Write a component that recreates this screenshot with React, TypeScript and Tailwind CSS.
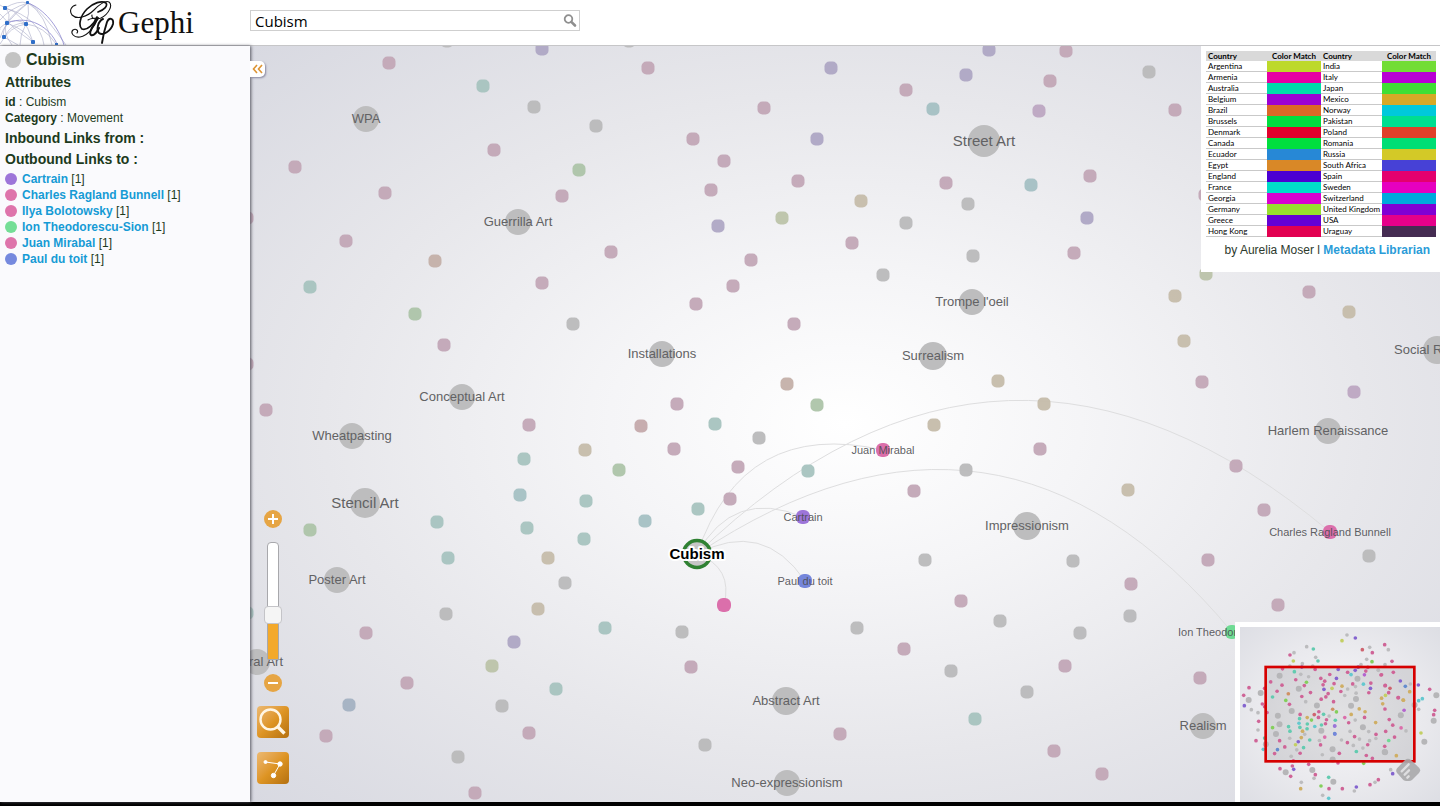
import { useState } from "react";

type Kind =
  | "pink" | "grey" | "teal" | "green" | "purple" | "tan"
  | "brown" | "red" | "blue" | "olive" | "magenta" | "aqua";

const MUTED: Record<Kind, string> = {
  pink: "#c2a7b6", grey: "#b9b9ba", teal: "#a7c3bf", green: "#adc4a9",
  purple: "#aea6c4", tan: "#c5bcaa", brown: "#c4b0a9", red: "#c4a9ab",
  blue: "#a3b1c2", olive: "#bcc3a9", magenta: "#bda6c2", aqua: "#a4c0c3",
};

const VIVID: Record<Kind, string> = {
  pink: "#cf6497", grey: "#bcbcbe", teal: "#63cbb0", green: "#84cf5c",
  purple: "#8464cf", tan: "#cfae64", brown: "#cf9164", red: "#cf6470",
  blue: "#648dcf", olive: "#c3cf64", magenta: "#b464cf", aqua: "#64c8cf",
};

const DOTS: Record<Kind, [number, number][]> = {
  pink: [
    [389, 63], [648, 68], [764, 108], [693, 139], [724, 161], [494, 150], [295, 167], [385, 193],
    [562, 196], [711, 190], [346, 241], [611, 252], [542, 283], [751, 260], [733, 286], [696, 304],
    [794, 324], [852, 243], [798, 181], [906, 90], [1066, 51], [1050, 81], [1175, 110], [946, 183],
    [1090, 176], [1074, 253], [444, 345], [266, 410], [529, 425], [677, 404], [674, 449], [738, 467],
    [730, 499], [1040, 449], [914, 491], [1202, 382], [1309, 292], [1236, 466], [1264, 510],
    [1208, 560], [1278, 605], [1131, 584], [961, 601], [904, 649], [1065, 666], [840, 734],
    [1054, 751], [1102, 774], [1200, 678], [691, 667], [529, 733], [475, 793], [407, 683],
    [366, 633], [326, 736], [1205, 195], [247, 218], [247, 364],
  ],
  grey: [
    [534, 107], [596, 126], [573, 324], [906, 223], [968, 204], [883, 275], [973, 256],
    [1149, 72], [759, 438], [966, 470], [925, 560], [1073, 561], [1130, 616], [1080, 633],
    [1000, 621], [857, 628], [951, 671], [1027, 692], [682, 632], [705, 745], [565, 583],
    [446, 614], [502, 706], [458, 757], [1369, 556], [447, 41], [629, 41],
  ],
  teal: [
    [483, 86], [310, 287], [715, 424], [524, 459], [586, 501], [527, 528], [584, 539], [698, 509],
    [808, 471], [437, 522], [448, 558], [605, 628], [556, 689], [975, 719], [247, 613],
  ],
  green: [[579, 170], [415, 314], [817, 405], [619, 470], [310, 530]],
  purple: [[542, 49], [718, 226], [817, 139], [831, 68], [966, 75], [989, 50], [1087, 218], [514, 642]],
  tan: [
    [861, 201], [1175, 296], [1349, 312], [1184, 341], [998, 381], [1044, 404], [934, 425],
    [1128, 490], [585, 450], [548, 558], [538, 609],
  ],
  brown: [[435, 261], [787, 384]],
  red: [[641, 426]],
  blue: [[349, 705]],
  olive: [[782, 218], [492, 666], [1206, 274]],
  magenta: [[1039, 111], [1354, 392]],
  aqua: [[933, 109], [1031, 185], [520, 495], [645, 521]],
};

type Movement = { name: string; x: number; y: number; r: number; large?: boolean };

const MOVEMENTS: Movement[] = [
  { name: "WPA", x: 366, y: 119, r: 13 },
  { name: "Guerrilla Art", x: 518, y: 222, r: 13 },
  { name: "Street Art", x: 984, y: 141, r: 16, large: true },
  { name: "Trompe l'oeil", x: 972, y: 302, r: 13 },
  { name: "Surrealism", x: 933, y: 356, r: 14 },
  { name: "Installations", x: 662, y: 354, r: 13 },
  { name: "Conceptual Art", x: 462, y: 397, r: 13 },
  { name: "Wheatpasting", x: 352, y: 436, r: 13 },
  { name: "Stencil Art", x: 365, y: 503, r: 15, large: true },
  { name: "Poster Art", x: 337, y: 580, r: 13 },
  { name: "Mural Art", x: 257, y: 662, r: 13 },
  { name: "Impressionism", x: 1027, y: 526, r: 14 },
  { name: "Harlem Renaissance", x: 1328, y: 431, r: 13 },
  { name: "Social Realism", x: 1437, y: 350, r: 14 },
  { name: "Realism", x: 1203, y: 726, r: 13 },
  { name: "Abstract Art", x: 786, y: 701, r: 14 },
  { name: "Neo-expressionism", x: 787, y: 783, r: 13 },
];

const FOCUS = { x: 697, y: 554 };

const NEIGHBOURS = [
  { name: "Cartrain", x: 803, y: 517, fill: "#9d75d9", dot: "bg-[#9d75d9]", label: true },
  { name: "Charles Ragland Bunnell", x: 1330, y: 532, fill: "#db6fab", dot: "bg-[#de74ab]", label: true },
  { name: "Ilya Bolotowsky", x: 724, y: 605, fill: "#db6fab", dot: "bg-[#de74ab]", label: false },
  { name: "Ion Theodorescu-Sion", x: 1232, y: 632, fill: "#6fdb94", dot: "bg-[#74de96]", label: true },
  { name: "Juan Mirabal", x: 883, y: 450, fill: "#db6fab", dot: "bg-[#de74ab]", label: true },
  { name: "Paul du toit", x: 805, y: 581, fill: "#7586db", dot: "bg-[#7589de]", label: true },
];

function edgePath(x: number, y: number) {
  const dx = x - FOCUS.x;
  const dy = y - FOCUS.y;
  const cx = (FOCUS.x + x) / 2 + dy * 0.45;
  const cy = (FOCUS.y + y) / 2 - dx * 0.45;
  return `M${FOCUS.x} ${FOCUS.y}Q${cx} ${cy} ${x} ${y}`;
}

const KINDS = Object.keys(DOTS) as Kind[];

function Graph() {
  return (
    <svg
      className="absolute inset-0 size-full font-['Liberation_Sans',Arial,sans-serif]"
      viewBox="250 46 1190 756"
      preserveAspectRatio="xMinYMin slice"
      role="img"
      aria-label="Network of art movements and artists"
    >
      <g fill="none" stroke="#dededf" strokeWidth="1">
        {NEIGHBOURS.map((n) => (
          <path key={n.name} d={edgePath(n.x, n.y)} />
        ))}
      </g>
      {KINDS.map((k) => (
        <g key={k} fill={MUTED[k]} fillOpacity="0.95">
          {DOTS[k].map(([x, y]) => (
            <rect key={`${x}-${y}`} x={x - 6.5} y={y - 6.5} width="13" height="13" rx="5" />
          ))}
        </g>
      ))}
      {MOVEMENTS.map((m) => (
        <g key={m.name}>
          <circle cx={m.x} cy={m.y} r={m.r} fill="#bdbdbe" />
          <text x={m.x} y={m.y + (m.large ? 5 : 4)} fontSize={m.large ? 15 : 13} textAnchor="middle" fill="#626264">
            {m.name}
          </text>
        </g>
      ))}
      {NEIGHBOURS.map((n) => (
        <g key={n.name}>
          <rect x={n.x - 7} y={n.y - 7} width="14" height="14" rx="6" fill={n.fill} />
          {n.label && (
            <text x={n.x} y={n.y + 4} fontSize="11" textAnchor="middle" fill="#4c4c50" fillOpacity="0.9">
              {n.name}
            </text>
          )}
        </g>
      ))}
      <circle cx={FOCUS.x} cy={FOCUS.y} r="13.5" fill="#c6c6c6" stroke="#2f8132" strokeWidth="3.5" />
      <text
        x={FOCUS.x}
        y={FOCUS.y + 5}
        fontSize="15"
        fontWeight="bold"
        textAnchor="middle"
        fill="#000"
        stroke="#fff"
        strokeWidth="4"
        strokeLinejoin="round"
        paintOrder="stroke"
      >
        Cubism
      </text>
    </svg>
  );
}

const OUTER: Partial<Record<Kind, [number, number][]>> = {
  grey: [
    [351, 61], [230, 96], [192, 114], [257, 128], [217, 147], [419, 98], [475, 105], [410, 134],
    [64, 285], [84, 294], [84, 346], [566, 284], [393, 150], [465, 150], [252, 491], [214, 503],
    [373, 529], [278, 542], [435, 503], [482, 465], [541, 208], [445, 167],
  ],
  pink: [
    [180, 121], [464, 90], [427, 114], [486, 140], [57, 219], [41, 242], [97, 268], [86, 320],
    [78, 378], [599, 224], [614, 287], [611, 300], [150, 462], [187, 454], [182, 485], [236, 449],
    [256, 480], [297, 522], [337, 522], [420, 510], [445, 495], [324, 445], [453, 181], [490, 173],
    [504, 249], [465, 213], [476, 234],
  ],
  purple: [[376, 70], [43, 273], [565, 211], [191, 464], [488, 477], [379, 517], [511, 199], [314, 334]],
  blue: [[526, 215], [314, 357]],
  teal: [[250, 103], [264, 139], [296, 488]],
  aqua: [[566, 258], [577, 252], [296, 551], [100, 404]],
  olive: [[336, 78], [190, 139], [573, 355]],
  green: [[426, 141], [273, 514], [401, 446]],
  red: [[397, 105], [480, 221]],
  tan: [[212, 522], [539, 231], [519, 256], [499, 423]],
};

const OUTER_LARGE: [number, number][] = [
  [56, 256], [92, 235], [619, 242], [611, 318], [583, 381], [167, 473], [247, 466], [310, 501], [464, 412],
];

const mapX = (x: number) => 105 + (x - 250) * 0.378;
const mapY = (y: number) => 156 + (y - 46) * 0.378;

function MiniMap() {
  return (
    <svg className="block size-full" viewBox="30 37 600 525" preserveAspectRatio="xMinYMin slice" role="img" aria-label="Overview map">
      <rect x="107" y="156" width="446" height="284" fill="#000" fillOpacity="0.09" />
      {KINDS.map((k) => (
        <g key={k} fill={VIVID[k]}>
          {DOTS[k].map(([x, y]) => (
            <circle key={`${x}-${y}`} cx={mapX(x)} cy={mapY(y)} r="5.5" />
          ))}
          {(OUTER[k] ?? []).map(([x, y]) => (
            <circle key={`o${x}-${y}`} cx={x} cy={y} r="5.5" />
          ))}
        </g>
      ))}
      <g fill="#b6b6b8">
        {MOVEMENTS.map((m) => (
          <circle key={m.name} cx={mapX(m.x)} cy={mapY(m.y)} r="9" />
        ))}
        <circle cx={mapX(FOCUS.x)} cy={mapY(FOCUS.y)} r="9" />
        {OUTER_LARGE.map(([x, y]) => (
          <circle key={`${x}-${y}`} cx={x} cy={y} r="9" />
        ))}
      </g>
      {NEIGHBOURS.map((n) => (
        <circle key={n.name} cx={mapX(n.x)} cy={mapY(n.y)} r="5.5" fill={n.fill} />
      ))}
      <rect x="107" y="157" width="446" height="283" fill="none" stroke="#d60000" strokeWidth="8" />
      <path d="M525 436q9-7 18 0l24 23q7 8 0 16l-21 21q-4 3-9 3h-8q-5 0-9-3l-18-20q-7-8 0-16z" fill="#a9a9ab" fillOpacity="0.9" />
      <path d="M515 470l21-21M524 480l13-13M532 489l4-4" stroke="#dedee0" strokeWidth="7" strokeLinecap="round" fill="none" />
    </svg>
  );
}

type Row = [string, string, string, string];

const LEGEND: Row[] = [
  ["Argentina", "bg-[#bdd92b]", "India", "bg-[#72dd35]"],
  ["Armenia", "bg-[#e600a4]", "Italy", "bg-[#b800d4]"],
  ["Australia", "bg-[#00dcaa]", "Japan", "bg-[#3fdf35]"],
  ["Belgium", "bg-[#9c00d4]", "Mexico", "bg-[#d6a927]"],
  ["Brazil", "bg-[#dc6827]", "Norway", "bg-[#00c9dc]"],
  ["Brussels", "bg-[#00df3f]", "Pakistan", "bg-[#00de91]"],
  ["Denmark", "bg-[#e2002c]", "Poland", "bg-[#e0402a]"],
  ["Canada", "bg-[#00df3f]", "Romania", "bg-[#00de75]"],
  ["Ecuador", "bg-[#2788d6]", "Russia", "bg-[#d3c927]"],
  ["Egypt", "bg-[#d98827]", "South Africa", "bg-[#4741d6]"],
  ["England", "bg-[#4c00d2]", "Spain", "bg-[#e4006e]"],
  ["France", "bg-[#00dcc9]", "Sweden", "bg-[#e600c0]"],
  ["Georgia", "bg-[#d900d0]", "Switzerland", "bg-[#00a9dc]"],
  ["Germany", "bg-[#98df2d]", "United Kingdom", "bg-[#8000d4]"],
  ["Greece", "bg-[#6400d4]", "USA", "bg-[#e5008a]"],
  ["Hong Kong", "bg-[#e20050]", "Uraguay", "bg-[#452c52]"],
];

const NAME_CELL = "border-b border-[#c9c9c9] p-0 pl-0.5";

function Legend() {
  return (
    <aside className="absolute top-0 right-0 h-[226px] bg-white pt-[5px] pr-1 pl-[5px]">
      <table className="w-[230px] table-fixed border-separate border-spacing-0 font-['Lato','Open_Sans',sans-serif] text-[8px] leading-[10px] text-black">
        <colgroup>
          <col className="w-[61px]" />
          <col className="w-[54px]" />
          <col className="w-[61px]" />
          <col className="w-[54px]" />
        </colgroup>
        <thead>
          <tr className="bg-[#d9d9d9] whitespace-nowrap">
            <th className="p-0 pl-0.5 text-left">Country</th>
            <th className="p-0">Color Match</th>
            <th className="p-0 pl-0.5 text-left">Country</th>
            <th className="p-0">Color Match</th>
          </tr>
        </thead>
        <tbody>
          {LEGEND.map(([a, ca, b, cb]) => (
            <tr key={a} className="whitespace-nowrap">
              <td className={NAME_CELL}>{a}</td>
              <td className={`p-0 ${ca}`} />
              <td className={NAME_CELL}>{b}</td>
              <td className={`p-0 ${cb}`} />
            </tr>
          ))}
        </tbody>
      </table>
      <p className="pt-1 pr-1.5 text-right text-xs leading-[18px] text-[#2d3a2d]">
        by Aurelia Moser l{" "}
        <a href="#librarian" className="font-bold text-[#2b9cd8]">Metadata Librarian</a>
      </p>
    </aside>
  );
}

function Logo() {
  return (
    <a href="#home" aria-label="Gephi" className="flex h-full w-[250px] shrink-0 items-center">
      <svg className="h-[45px] w-[68px]" viewBox="0 0 68 45" fill="none">
        <g stroke="#a9abc8" strokeWidth="0.6">
          <path d="M5 8Q18 0 28 3T66 45M5 8Q12 14 7 23T4 37M28 3Q14 12 7 23M26 24Q16 18 7 23T0 30M5 8Q24 12 33 42M26 24Q44 26 56 44M28 3Q30 14 26 24M4 37Q14 20 26 24M28 3Q10 8 0 20M7 23Q26 30 33 42M4 37L18 45M0 5L5 8M26 24Q20 34 20 45M28 3Q46 14 52 45M7 23Q2 32 12 45M5 8Q40 18 44 45M0 44Q10 26 26 24M0 14Q14 30 33 42M28 3Q4 22 0 38" />
        </g>
        <path d="M28 3C44 9 58 26 64 45M7 23C30 14 50 28 57 44" stroke="#8b86cf" strokeWidth="0.8" />
        <g fill="#2f6fc9">
          <rect x="3" y="6" width="4" height="4" rx="1" />
          <rect x="26" y="1" width="3" height="3" rx="1" />
          <rect x="5" y="21" width="4" height="4" rx="1" />
          <rect x="24" y="22" width="4" height="4" rx="1" />
          <rect x="2" y="35" width="4" height="4" rx="1" />
          <rect x="31" y="40" width="4" height="4" rx="1" />
          <rect x="55" y="43" width="3" height="2" />
        </g>
      </svg>
      <svg className="h-[45px] w-[50px]" viewBox="68 0 50 45" fill="none" stroke="#111" strokeLinecap="round">
        <path d="M98 12C104 10 108 6 106 3C102 0 93 3 87 9C80 16 78 26 82 29C87 31 94 24 97 17" strokeWidth="1.7" />
        <path d="M76 5C71 6 69 11 72 15C77 20 87 17 94 10C99 5 105 0 109 2C113 5 109 14 101 18C96 20 91 19 92 15" strokeWidth="1.1" />
        <path d="M88 20C91 18 95 18 98 18C95 26 88 36 80 37C74 38 70 33 73 30C76 28 79 31 77 33" strokeWidth="1.1" />
        <path d="M98 18C94 24 88 33 91 35C94 36 97 32 99 28" strokeWidth="2" />
        <path d="M103 19C98 21 96 30 99 33C103 36 111 31 113 24C114 18 109 17 107 22C105 28 103 36 102 43" strokeWidth="1.9" />
      </svg>
      <span className="font-['Liberation_Serif',serif] text-[31px] leading-[44px] text-[#111]">Gephi</span>
    </a>
  );
}

function Header({ query, onQuery }: { query: string; onQuery: (v: string) => void }) {
  return (
    <header className="flex h-[46px] shrink-0 items-center border-b border-[#c6c6c8] bg-white">
      <Logo />
      <form className="-mt-1 flex h-[21px] w-[330px] items-center border border-[#cfcfcf] bg-white" role="search">
        <input
          type="text"
          aria-label="Search nodes"
          value={query}
          onChange={(e) => onQuery(e.target.value)}
          className="h-full min-w-0 flex-1 pl-1 font-['Open_Sans',sans-serif] text-[15px] text-black outline-none"
        />
        <button type="button" aria-label="Search" className="pr-0.5">
          <svg className="size-[14px]" viewBox="0 0 14 14" fill="none" stroke="#8f8f8f" strokeLinecap="round">
            <circle cx="5.5" cy="5" r="3.8" strokeWidth="1.8" />
            <path d="M8.6 8.1L12 11.5" strokeWidth="2.6" />
          </svg>
        </button>
      </form>
    </header>
  );
}

function Sidebar() {
  return (
    <section className="z-10 w-[250px] shrink-0 bg-[#fafafd] pt-1 pl-[5px] text-xs leading-4 text-[#1c3a1c] shadow-[1px_0_3px_#55555f]">
      <h1 className="flex items-center gap-[5px] text-base leading-5 font-bold">
        <span className="size-4 rounded-full bg-[#c3c3c3]" />
        Cubism
      </h1>
      <h2 className="pt-[3px] text-sm leading-[18px] font-bold">Attributes</h2>
      <dl className="pt-[3px]">
        <div><dt className="inline font-bold">id</dt><dd className="inline"> : Cubism</dd></div>
        <div><dt className="inline font-bold">Category</dt><dd className="inline"> : Movement</dd></div>
      </dl>
      <h2 className="pt-[3px] text-sm leading-[18px] font-bold">Inbound Links from :</h2>
      <h2 className="pt-[3px] text-sm leading-[18px] font-bold">Outbound Links to :</h2>
      <ul className="pt-[3px]">
        {NEIGHBOURS.map((n) => (
          <li key={n.name} className="flex items-center gap-[5px]">
            <span className={`size-3 rounded-full ${n.dot}`} />
            <span>
              <a href="#node" className="font-bold text-[#169bd5]">{n.name}</a> [1]
            </span>
          </li>
        ))}
      </ul>
    </section>
  );
}

const ROUND = "grid size-[18px] place-items-center rounded-full bg-[#e6a544]";
const TILE = "grid size-8 place-items-center rounded-sm bg-linear-135 from-[#ecb970] via-[#de9524] to-[#b4700f]";

function Controls() {
  const [zoom, setZoom] = useState(36);
  const fill = 9 + zoom;
  return (
    <div className="absolute bottom-[18px] left-[7px] flex flex-col items-center gap-3.5">
      <button type="button" aria-label="Zoom in" className={ROUND} onClick={() => setZoom(Math.min(100, zoom + 5))}>
        <svg className="size-[10px]" viewBox="0 0 10 10" stroke="#fff" strokeWidth="2"><path d="M5 0v10M0 5h10" /></svg>
      </button>
      <div className="relative h-[118px] w-3 overflow-visible rounded-t-sm border border-[#a8a8ac] bg-white">
        <div className="absolute inset-x-0 bottom-0 bg-[#f3a92b]" style={{ height: fill }} />
        <input
          type="range"
          min={0}
          max={100}
          value={zoom}
          onChange={(e) => setZoom(Number(e.target.value))}
          aria-label="Zoom level"
          className="absolute -top-px -left-1 h-[118px] w-[18px] appearance-none bg-transparent [direction:rtl] [writing-mode:vertical-lr] [&::-webkit-slider-thumb]:size-[18px] [&::-webkit-slider-thumb]:appearance-none [&::-webkit-slider-thumb]:rounded [&::-webkit-slider-thumb]:border [&::-webkit-slider-thumb]:border-[#c4c4c8] [&::-webkit-slider-thumb]:bg-[#f5f5f5]"
        />
      </div>
      <button type="button" aria-label="Zoom out" className={ROUND} onClick={() => setZoom(Math.max(0, zoom - 5))}>
        <svg className="size-[10px]" viewBox="0 0 10 10" stroke="#fff" strokeWidth="2"><path d="M0 5h10" /></svg>
      </button>
      <button type="button" aria-label="Magnify" className={TILE}>
        <svg className="size-8" viewBox="0 0 32 32" fill="none" stroke="#fff6e4">
          <circle cx="13.5" cy="13.5" r="10" strokeWidth="2.4" />
          <path d="M20.5 20.5L27.5 27.5" strokeWidth="3.4" />
        </svg>
      </button>
      <button type="button" aria-label="Toggle edges" className={TILE}>
        <svg className="size-8" viewBox="0 0 32 32" fill="#fff" stroke="#fff">
          <path d="M8.5 10L23 12L16.5 23.5" fill="none" strokeWidth="1" />
          <circle cx="8.5" cy="10" r="1.5" />
          <circle cx="23" cy="12" r="2.2" />
          <circle cx="16.5" cy="23.5" r="2.2" />
        </svg>
      </button>
    </div>
  );
}

export default function App() {
  const [query, setQuery] = useState("Cubism");
  return (
    <div className="flex h-screen flex-col bg-black pb-1 font-['Liberation_Sans',Arial,sans-serif]">
      <Header query={query} onQuery={setQuery} />
      <div className="flex min-h-0 flex-1">
        <Sidebar />
        <main className="relative min-w-0 flex-1 overflow-hidden bg-[radial-gradient(ellipse_at_center,#ffffff_0%,#f5f5f7_28%,#e7e7eb_62%,#d8d9e1_100%)]">
          <Graph />
          <button
            type="button"
            aria-label="Collapse panel"
            className="absolute top-[15px] left-0 z-20 grid h-4 w-[15px] place-items-center rounded-r-[5px] bg-white shadow-[1px_1px_2px_#8888a0]"
          >
            <svg className="h-[10px] w-[11px]" viewBox="0 0 11 10" fill="none" stroke="#dd9433" strokeWidth="1.6">
              <path d="M5 1L1.5 5L5 9M10 1L6.5 5L10 9" />
            </svg>
          </button>
          <Controls />
          <Legend />
          <div className="absolute right-0 bottom-0 h-[180px] w-[205px] border-t-[5px] border-l-[5px] border-white bg-[radial-gradient(ellipse_at_center,#f8f8fa_0%,#e9e9ed_60%,#dddee4_100%)]">
            <MiniMap />
          </div>
        </main>
      </div>
    </div>
  );
}
